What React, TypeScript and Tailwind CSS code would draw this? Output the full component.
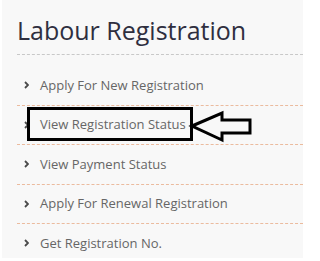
const items = [
  'Apply For New Registration',
  'View Registration Status',
  'View Payment Status',
  'Apply For Renewal Registration',
  'Get Registration No.',
];

function Chevron() {
  return (
    <svg width="5" height="8" viewBox="0 0 5 8" className="shrink-0">
      <polyline points="1,1 4,4 1,7" fill="none" stroke="#4a4a4a" strokeWidth="1.8" />
    </svg>
  );
}

export default function App() {
  return (
    <div className="w-[303px] h-[261px] bg-white overflow-hidden" style={{ fontFamily: '"Open Sans", sans-serif' }}>
      <div className="ml-[2px] h-[258px] bg-[#f8f8f8] pl-[15px] pt-[14px]">
        <h2 className="text-[25px] leading-[33px] text-[#2f2f3f] pb-[7px] border-b border-dashed border-[#c8c8c8] whitespace-nowrap">
          Labour Registration
        </h2>
        <ul className="mt-[11px]">
          {items.map((label, i) => (
            <li
              key={label}
              className="relative h-[39.5px] flex items-center pl-[7px] border-b border-dashed border-[#ebbb9e]"
            >
              <Chevron />
              <span className="ml-[11px] text-[13px] text-[#666] whitespace-nowrap">{label}</span>
              {i === 1 && (
                <>
                  <div className="absolute left-[10px] top-[1px] w-[166px] h-[34px] border-[3px] border-black" />
                  <svg
                    width="70"
                    height="36"
                    viewBox="0 0 70 36"
                    className="absolute left-[169px] top-[2px]"
                  >
                    <polygon
                      points="6,18 36,5 36,12 64,12 64,25 36,25 36,32"
                      fill="none"
                      stroke="#000"
                      strokeWidth="3"
                      strokeLinejoin="miter"
                    />
                  </svg>
                </>
              )}
            </li>
          ))}
        </ul>
      </div>
    </div>
  );
}
